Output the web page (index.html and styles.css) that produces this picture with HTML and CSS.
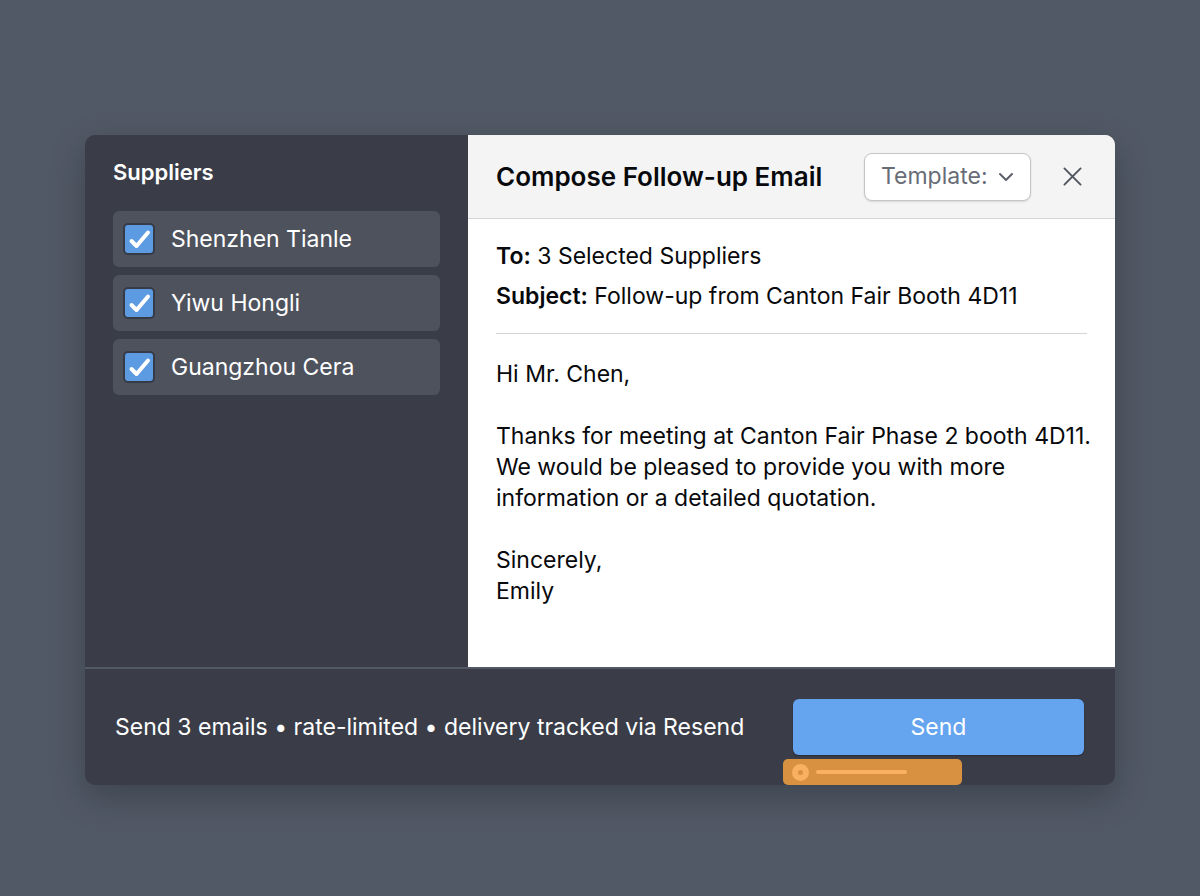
FILE: index.html
```html
<!DOCTYPE html>
<html lang="en">
<head>
    <meta charset="UTF-8">
    <meta name="viewport" content="width=device-width, initial-scale=1.0">
    <title>Compose Follow-up Email</title>
    <link rel="stylesheet" href="styles.css">
</head>
<body>
    <form class="dialog">
        <div class="main">
            <aside class="sidebar">
                <h2>Suppliers</h2>
                <label class="supplier">
                    <span class="check">
                        <input type="checkbox" name="supplier" value="tianle" checked>
                        <svg viewBox="0 0 28 28"><path d="M6.500 16l5 5L23 7.500"/></svg>
                    </span>
                    Shenzhen Tianle
                </label>
                <label class="supplier">
                    <span class="check">
                        <input type="checkbox" name="supplier" value="hongli" checked>
                        <svg viewBox="0 0 28 28"><path d="M6.500 16l5 5L23 7.500"/></svg>
                    </span>
                    Yiwu Hongli
                </label>
                <label class="supplier">
                    <span class="check">
                        <input type="checkbox" name="supplier" value="cera" checked>
                        <svg viewBox="0 0 28 28"><path d="M6.500 16l5 5L23 7.500"/></svg>
                    </span>
                    Guangzhou Cera
                </label>
            </aside>

            <section class="compose">
                <header class="compose-header">
                    <h1>Compose Follow-up Email</h1>
                    <div class="template">
                        <select name="template" aria-label="Template">
                            <option>Template:</option>
                        </select>
                        <svg viewBox="0 0 14 10"><path d="M1 2l6 6 6-6"/></svg>
                    </div>
                    <button type="button" class="close" aria-label="Close">
                        <svg viewBox="0 0 20 20"><path d="M1.500 1.500l17 17M18.500 1.500l-17 17"/></svg>
                    </button>
                </header>

                <div class="fields">
                    <p><strong>To:</strong> 3 Selected Suppliers</p>
                    <p><strong>Subject:</strong> Follow-up from Canton Fair Booth 4D11</p>
                </div>

                <textarea class="message" name="message" aria-label="Message" spellcheck="false">Hi Mr. Chen,

Thanks for meeting at Canton Fair Phase 2 booth 4D11.
We would be pleased to provide you with more
information or a detailed quotation.

Sincerely,
Emily</textarea>
            </section>
        </div>

        <footer class="footer">
            <p>Send 3 emails • rate-limited • delivery tracked via Resend</p>
            <button type="submit" class="send">Send</button>
            <div class="badge">
                <span class="badge-dot"></span>
                <span class="badge-line"></span>
            </div>
        </footer>
    </form>
</body>
</html>
```
FILE: styles.css
```css
* {
    box-sizing: border-box;
}

body {
    margin: 0;
    min-height: 100vh;
    padding: 135px 85px 111px;
    display: flex;
    font-family: Inter, "Liberation Sans", sans-serif;
    font-size: 23px;
    line-height: 31px;
    color: #08090c;
    background-color: #525966;
}

h1, h2, p {
    margin: 0;
}

svg {
    fill: none;
    stroke-linecap: round;
    stroke-linejoin: round;
}

.dialog {
    flex: 1;
    display: flex;
    flex-direction: column;
    border-radius: 10px;
    background-color: #3a3d48;
    box-shadow: 0 12px 32px rgba(36, 46, 54, 0.45);
}

.main {
    flex: 1;
    display: grid;
    grid-template-columns: 383fr 647fr;
}

.sidebar {
    display: flex;
    flex-direction: column;
    gap: 8px;
    padding: 22px 28px;
    color: #fff;
}

.sidebar h2 {
    margin-bottom: 15px;
    font-size: 22px;
    font-weight: 600;
}

.supplier {
    display: flex;
    align-items: center;
    gap: 18px;
    height: 56px;
    padding: 0 12px;
    border-radius: 6px;
    background-color: #4e525d;
    cursor: pointer;
}

.check {
    display: grid;
    width: 28px;
    height: 28px;
}

.check input,
.check svg {
    grid-area: 1 / 1;
    width: 28px;
    height: 28px;
    margin: 0;
}

.check input {
    appearance: none;
    border-radius: 3px;
    background-color: #4e525d;
    box-shadow: 0 0 0 2px #373b46;
}

.check input:checked {
    background-color: #5c9ae2;
}

.check svg {
    stroke: #fff;
    stroke-width: 4;
    pointer-events: none;
}

.check input:not(:checked) + svg {
    display: none;
}

.compose {
    display: flex;
    flex-direction: column;
    min-width: 0;
    border-top-right-radius: 10px;
    background-color: #fff;
}

.compose-header {
    display: flex;
    align-items: center;
    height: 84px;
    padding: 0 28px;
    border-bottom: 1px solid #d5d5d7;
    border-top-right-radius: 10px;
    background-color: #f4f4f5;
}

.compose-header h1 {
    flex: 1;
    font-size: 26px;
    font-weight: 600;
}

.template {
    display: grid;
    align-items: center;
    width: 167px;
    height: 48px;
}

.template select,
.template svg {
    grid-area: 1 / 1;
}

.template select {
    appearance: none;
    width: 100%;
    height: 100%;
    padding: 0 16px;
    border: 1px solid #c4c5c9;
    border-radius: 8px;
    background-color: #fff;
    box-shadow: 0 1px 2px rgba(0, 0, 0, 0.12);
    font: inherit;
    color: #686c76;
}

.template svg {
    justify-self: end;
    width: 14px;
    height: 10px;
    margin-right: 18px;
    stroke: #5d616b;
    stroke-width: 2;
    pointer-events: none;
}

.close {
    display: flex;
    margin-left: 28px;
    padding: 5px 5px 5px 4px;
    border: none;
    background: none;
    cursor: pointer;
}

.close svg {
    width: 19px;
    height: 19px;
    stroke: #50545e;
    stroke-width: 2;
}

.fields {
    display: flex;
    flex-direction: column;
    gap: 9px;
    margin: 0 28px;
    padding: 22px 0 21px;
    border-bottom: 1px solid #d5d5d7;
}

.fields strong {
    font-weight: 600;
}

.message {
    flex: 1;
    min-height: 300px;
    padding: 25px 20px 24px 28px;
    border: none;
    outline: none;
    resize: none;
    background: none;
    font: inherit;
    color: inherit;
}

.footer {
    position: relative;
    display: flex;
    align-items: center;
    justify-content: space-between;
    height: 118px;
    padding: 0 31px 0 30px;
    border-top: 2px solid #535965;
    color: #fff;
}

.send {
    width: 291px;
    height: 56px;
    border: none;
    border-radius: 6px;
    background-color: #65a4ef;
    box-shadow: 0 1px 2px rgba(0, 0, 0, 0.3);
    font: inherit;
    color: #fff;
    cursor: pointer;
}

.badge {
    position: absolute;
    right: 153px;
    bottom: 0;
    display: flex;
    align-items: center;
    gap: 7px;
    width: 179px;
    height: 26px;
    padding: 0 9px;
    border-radius: 5px;
    background-color: #d79141;
}

.badge-dot {
    width: 17px;
    height: 17px;
    border: 6px solid #fab15f;
    border-radius: 50%;
}

.badge-line {
    width: 91px;
    height: 4px;
    border-radius: 2px;
    background-color: #fab15f;
}
```
